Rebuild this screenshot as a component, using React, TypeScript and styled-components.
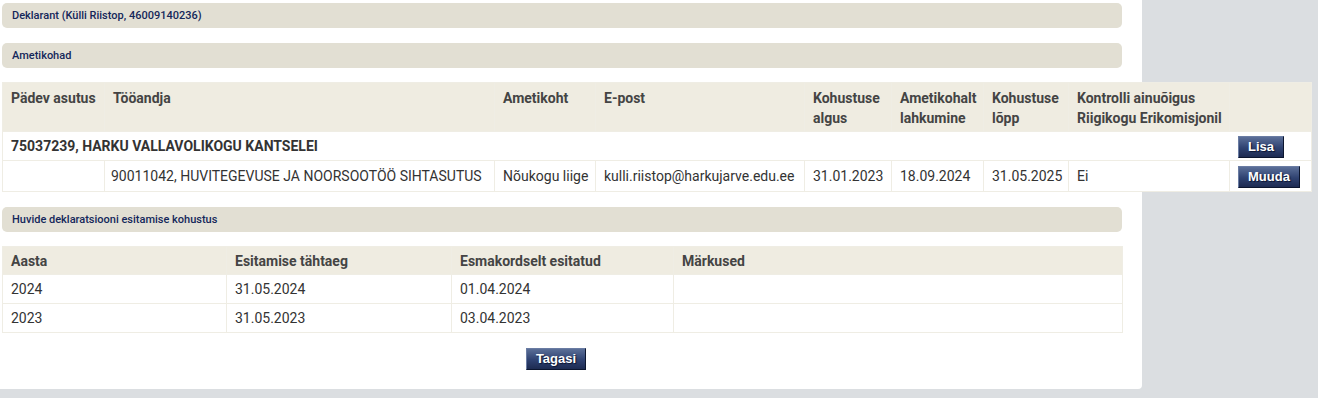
import styled, { createGlobalStyle } from "styled-components";

interface Position {
  employer: string;
  role: string;
  email: string;
  start: string;
  left: string;
  end: string;
  control: string;
}

interface Duty {
  year: string;
  deadline: string;
  firstSubmitted: string;
  notes: string;
}

const positions: Position[] = [
  {
    employer: "90011042, HUVITEGEVUSE JA NOORSOOTÖÖ SIHTASUTUS",
    role: "Nõukogu liige",
    email: "kulli.riistop@harkujarve.edu.ee",
    start: "31.01.2023",
    left: "18.09.2024",
    end: "31.05.2025",
    control: "Ei",
  },
];

const duties: Duty[] = [
  { year: "2024", deadline: "31.05.2024", firstSubmitted: "01.04.2024", notes: "" },
  { year: "2023", deadline: "31.05.2023", firstSubmitted: "03.04.2023", notes: "" },
];

const positionCols = [102, 390, 101, 209, 87, 92, 85, 161, 82];
const dutyCols = [224, 225, 222, 449];

const App: React.FC = () => {
  return (
    <>
      <GlobalStyle />
      <Page>
        <Panel>
          <SectionBar>Deklarant (Külli Riistop, 46009140236)</SectionBar>
          <SectionBar>Ametikohad</SectionBar>

          <PositionTable>
            <colgroup>
              {positionCols.map((w, i) => (
                <col key={i} style={{ width: w }} />
              ))}
            </colgroup>
            <thead>
              <tr>
                <Th>Pädev asutus</Th>
                <Th>Tööandja</Th>
                <Th>Ametikoht</Th>
                <Th>E-post</Th>
                <Th>
                  Kohustuse
                  <br />
                  algus
                </Th>
                <Th>
                  Ametikohalt
                  <br />
                  lahkumine
                </Th>
                <Th>
                  Kohustuse
                  <br />
                  lõpp
                </Th>
                <Th>
                  Kontrolli ainuõigus
                  <br />
                  Riigikogu Erikomisjonil
                </Th>
                <Th />
              </tr>
            </thead>
            <tbody>
              <tr>
                <GroupCell colSpan={8}>75037239, HARKU VALLAVOLIKOGU KANTSELEI</GroupCell>
                <ButtonCell $top={4} $bottom={2}>
                  <ActionButton>Lisa</ActionButton>
                </ButtonCell>
              </tr>
              {positions.map((p) => (
                <tr key={p.employer}>
                  <Td />
                  <Td $pad={6}>{p.employer}</Td>
                  <Td>{p.role}</Td>
                  <Td>{p.email}</Td>
                  <Td>{p.start}</Td>
                  <Td>{p.left}</Td>
                  <Td>{p.end}</Td>
                  <Td>{p.control}</Td>
                  <ButtonCell $top={5} $bottom={3}>
                    <ActionButton>Muuda</ActionButton>
                  </ButtonCell>
                </tr>
              ))}
            </tbody>
          </PositionTable>

          <SectionBar>Huvide deklaratsiooni esitamise kohustus</SectionBar>

          <DutyTable>
            <colgroup>
              {dutyCols.map((w, i) => (
                <col key={i} style={{ width: w }} />
              ))}
            </colgroup>
            <thead>
              <tr>
                <Th $single>Aasta</Th>
                <Th $single>Esitamise tähtaeg</Th>
                <Th $single>Esmakordselt esitatud</Th>
                <Th $single>Märkused</Th>
              </tr>
            </thead>
            <tbody>
              {duties.map((d) => (
                <tr key={d.year}>
                  <Td>{d.year}</Td>
                  <Td>{d.deadline}</Td>
                  <Td>{d.firstSubmitted}</Td>
                  <Td>{d.notes}</Td>
                </tr>
              ))}
            </tbody>
          </DutyTable>

          <Footer>
            <ActionButton>Tagasi</ActionButton>
          </Footer>
        </Panel>
      </Page>
    </>
  );
};

const GlobalStyle = createGlobalStyle`
  html, body {
    margin: 0;
    padding: 0;
    background: #dbdee1;
  }
  body {
    font-family: Roboto, "Liberation Sans", Arial, sans-serif;
  }
`;

const Page = styled.div`
  min-height: 398px;
  background: #dbdee1;
`;

const Panel = styled.div`
  width: 1142px;
  box-sizing: border-box;
  padding: 3px 20px 19px 2px;
  background: #ffffff;
  border-bottom-right-radius: 4px;
  display: flex;
  flex-direction: column;
  gap: 15px;
`;

const SectionBar = styled.div`
  height: 25px;
  display: flex;
  align-items: center;
  padding-left: 10px;
  background: #e2dfd3;
  border-radius: 5px;
  font-size: 11px;
  font-weight: 500;
  color: #14275a;
`;

const BaseTable = styled.table`
  border-collapse: collapse;
  table-layout: fixed;
  background: #ffffff;
  font-size: 14px;
  line-height: 20px;
  color: #333333;
  border: 1px solid #efede4;
  margin-top: -1px;
`;

const PositionTable = styled(BaseTable)`
  width: 1309px;
`;

const DutyTable = styled(BaseTable)`
  width: 1120px;
`;

const Th = styled.th<{ $single?: boolean }>`
  background: #efece1;
  color: #444444;
  font-weight: 700;
  text-align: left;
  vertical-align: top;
  padding: ${({ $single }) => ($single ? "4px 8px 3px" : "5px 8px 3px")};
  height: ${({ $single }) => ($single ? "20px" : "40px")};
  border: 1px solid #efede4;
  white-space: nowrap;
`;

const Td = styled.td<{ $pad?: number }>`
  padding: 4px ${({ $pad = 8 }) => $pad}px;
  border: 1px solid #efede4;
  vertical-align: middle;
  white-space: nowrap;
`;

const GroupCell = styled(Td)`
  font-weight: 700;
  color: #333333;
  border-right-color: #ffffff;
`;

const ButtonCell = styled.td<{ $top: number; $bottom: number }>`
  padding: ${({ $top, $bottom }) => `${$top}px 8px ${$bottom}px`};
  border: 1px solid #efede4;
  vertical-align: top;
  line-height: 0;
`;

const ActionButton = styled.button`
  height: 22px;
  padding: 0 9px;
  font-family: "Liberation Sans", Arial, sans-serif;
  font-size: 13px;
  font-weight: 700;
  line-height: 20px;
  color: #ffffff;
  text-shadow: 1px 1px 1px #0b1430;
  background: linear-gradient(#5b6f98, #2f4271 55%, #1d2b52);
  border: 1px solid;
  border-color: #6a7ca3 #0c162f #0c162f #6a7ca3;
  border-radius: 0;
  cursor: pointer;
`;

const Footer = styled.div`
  display: flex;
  justify-content: center;
  padding-right: 12px;
`;

export default App;
